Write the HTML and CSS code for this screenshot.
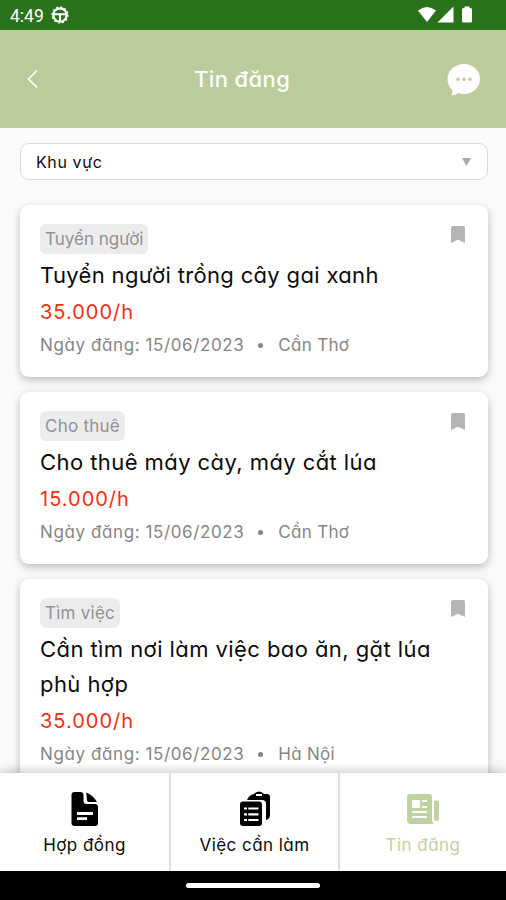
FILE: index.html
```html
<!DOCTYPE html>
<html lang="vi">
<head>
<meta charset="utf-8">
<title>Tin đăng</title>
<link rel="stylesheet" href="styles.css">
</head>
<body>
<div class="screen">
  <div class="status">
    <span class="clock">4:49</span>
    <svg class="wheel" width="18" height="18" viewBox="0 0 18 18" fill="none" stroke="#fff"><circle cx="9" cy="9" r="6.7" stroke-width="2.2"/><circle cx="9" cy="9" r="8" stroke-width="1.2" stroke-dasharray="2 2.2"/><path d="M3 8.2h12M9 9v6" stroke-width="2"/></svg>
    <svg class="signals" width="56" height="18" viewBox="0 0 56 18" fill="#fff"><path d="M0 4.5Q9-2.5 18 4.5L9 16z"/><path d="M19.5 16.5L35.500 0.500v16z"/><path d="M46.500 0.500h5v1.500h1q1.500 0 1.500 1.500v11.500q0 1.500-1.500 1.500h-7q-1.500 0-1.500-1.500V3.500q0-1.500 1.500-1.500h1z"/></svg>
  </div>
  <header class="header">
    <svg width="12" height="20" viewBox="0 0 12 20" fill="none" stroke="#fff" stroke-width="1.7"><path d="M10 1.500L1.500 10l8.500 8.500"/></svg>
    <h1>Tin đăng</h1>
    <svg class="chat" width="34" height="32" viewBox="0 0 34 32"><path fill="#fff" d="M17 0C26 0 33 6.500 33 15s-7 15-16 15c-2 0-4-.4-6-1-2 2-5 2.500-7 2 1.500-1.500 1.500-3.500 1.200-5C2 23 .5 19 .5 15 .5 6.500 8 0 17 0z"/><g fill="#bccb9b"><circle cx="11" cy="15.300" r="1.700"/><circle cx="17" cy="15.300" r="1.700"/><circle cx="23" cy="15.300" r="1.700"/></g></svg>
  </header>
  <main class="content">
    <div class="select"><span>Khu vực</span><svg width="9" height="8" viewBox="0 0 9 8"><path fill="#aaa" d="M0 0h9L4.500 8z"/></svg></div>
    <article class="card">
      <div class="top"><span class="tag">Tuyển người</span><svg class="mark" width="14" height="17" viewBox="0 0 14 17"><path d="M2 0h10q2 0 2 2v15l-7-3.200L0 17V2q0-2 2-2z"/></svg></div>
      <h2>Tuyển người trồng cây gai xanh</h2>
      <p class="price">35.000/h</p>
      <p class="meta"><span class="date">Ngày đăng: 15/06/2023</span><i></i><span class="place">Cần Thơ</span></p>
    </article>
    <article class="card">
      <div class="top"><span class="tag spaced">Cho thuê</span><svg class="mark" width="14" height="17" viewBox="0 0 14 17"><path d="M2 0h10q2 0 2 2v15l-7-3.200L0 17V2q0-2 2-2z"/></svg></div>
      <h2 class="wide">Cho thuê máy cày, máy cắt lúa</h2>
      <p class="price">15.000/h</p>
      <p class="meta"><span class="date">Ngày đăng: 15/06/2023</span><i></i><span class="place">Cần Thơ</span></p>
    </article>
    <article class="card">
      <div class="top"><span class="tag spaced">Tìm việc</span><svg class="mark" width="14" height="17" viewBox="0 0 14 17"><path d="M2 0h10q2 0 2 2v15l-7-3.200L0 17V2q0-2 2-2z"/></svg></div>
      <h2 class="wide">Cần tìm nơi làm việc bao ăn, gặt lúa<br>phù hợp</h2>
      <p class="price">35.000/h</p>
      <p class="meta"><span class="date">Ngày đăng: 15/06/2023</span><i></i><span class="place">Hà Nội</span></p>
    </article>
  </main>
  <nav class="tabs">
    <a class="tab"><svg width="36" height="36" viewBox="0 0 36 36"><path d="M7.500 1h6q3 0 3 3v6q0 3 3 3H28q3 0 3 3v16q0 3-3 3H7.500q-3 0-3-3V4q0-3 3-3z"/><path d="M19 1.500Q26 4 30 11h-8q-2 0-2-2-.2-4-1-7.500z"/><path stroke="#fff" stroke-width="2.800" d="M10 22.500h16M10 27.700h10"/></svg><span>Hợp đồng</span></a>
    <a class="tab"><svg width="36" height="36" viewBox="0 0 36 36"><path d="M10 9q2-5 7-6 2-2.500 5-2.500T27 3h3q3 0 3 3v18q0 4-4 5V13q0-4-4-4z"/><path d="M19 4h6" stroke="#fff" stroke-width="2"/><path d="M6 10.500h16q3 0 3 3V32q0 3-3 3H6q-3 0-3-3V13.500q0-3 3-3z"/><path stroke="#fff" stroke-width="2.200" d="M7 17.500h3M11.300 17.500h10.200M7 23.300h3M11.300 23.300h10.200M7 29h3M11.300 29h10.200"/></svg><span>Việc cần làm</span></a>
    <a class="tab active"><svg width="36" height="36" viewBox="0 0 36 36"><path fill="#c2d1a1" d="M5 3h19q3 0 3 3v23q0 2 2 4H6q-4 0-4-4V6q0-3 3-3z"/><path fill="#c2d1a1" d="M29 9.500h3q2 0 2 2V28q0 2-2 2h-1q-2 0-2-2z"/><path fill="#fff" d="M7 9h8v8H7z"/><path stroke="#fff" stroke-width="2" d="M17 10h5M17 16h5M7 21h15M7 26h15"/></svg><span>Tin đăng</span></a>
  </nav>
  <div class="home"><span></span></div>
</div>
</body>
</html>
```

FILE: styles.css
```css
* { box-sizing: border-box; }
body { margin: 0; background: #000; }
h1, h2, p { margin: 0; font-weight: 400; }
svg { display: block; flex: none; }
.screen {
  width: 506px; height: 900px; overflow: hidden;
  display: flex; flex-direction: column;
  font-family: Inter, "Noto Sans", sans-serif;
  font-feature-settings: "cv11";
  color: #0b0b0b; white-space: nowrap;
}
.status {
  flex: none; height: 30px; padding: 0 32px 0 10px; background: #2a711b;
  display: flex; align-items: center; color: #fff;
}
.clock { font: 400 17.5px/30px Roboto, sans-serif; width: 41px; padding-top: 1px; }
.signals { margin-left: auto; }
.header {
  flex: none; height: 98px; padding: 0 25px 0 27px; background: #bccb9b;
  display: flex; align-items: center;
}
.header h1 {
  margin: 0 auto 0 155px; font-size: 22px; font-weight: 500;
  letter-spacing: .4px; color: #fff;
}
.chat { margin-top: 2px; }
.content {
  flex: 1; min-height: 0; overflow: hidden; background: #fafafa;
  padding: 15px 18px 0 20px; display: flex; flex-direction: column;
}
.select {
  flex: none; height: 37px; margin-bottom: 25px; padding: 0 16px 0 15px;
  border: 1.500px solid #dadada; border-radius: 9px; background: #fff;
  display: flex; align-items: center; justify-content: space-between;
  font-size: 16px; letter-spacing: .6px;
}
.card {
  flex: none; margin-bottom: 15px; padding: 19px 20px 18px; background: #fff;
  border-radius: 9px; box-shadow: 0 3px 8px rgba(0, 0, 0, .25);
}
.top { display: flex; justify-content: space-between; height: 34px; padding-right: 3px; }
.tag {
  height: 30px; padding: 0 5px; border-radius: 6px; background: #ececec;
  color: #929292; font-size: 17px; line-height: 30px;
}
.spaced { letter-spacing: .25px; }
.mark { margin-top: 2px; fill: #b5b5b5; }
.card h2 { font-size: 22px; line-height: 35px; letter-spacing: .34px; }
.card .wide { letter-spacing: .43px; }
.price { font-size: 20px; line-height: 38px; letter-spacing: 1px; color: #f03010; }
.meta { display: flex; align-items: center; line-height: 28px; font-size: 17px; color: #858585; }
.date { letter-spacing: .6px; }
.place { letter-spacing: .3px; }
.meta i { width: 5px; height: 5px; margin: 0 15px 0 14px; border-radius: 50%; background: #858585; }
.tabs {
  flex: none; height: 98px; display: grid; grid-template-columns: 169px 169px 168px;
  background: #fff; position: relative; box-shadow: 0 -2px 10px rgba(0, 0, 0, .22);
}
.tab {
  padding-top: 18px; display: flex; flex-direction: column; align-items: center;
  font-size: 17px; line-height: 37px; letter-spacing: .45px;
}
.tab + .tab { border-left: 2px solid #dedede; }
.active { color: #c2d1a1; }
.home { flex: none; height: 29px; background: #000; display: flex; justify-content: center; padding-top: 12px; }
.home span { width: 134px; height: 5px; border-radius: 3px; background: #fff; }
```
